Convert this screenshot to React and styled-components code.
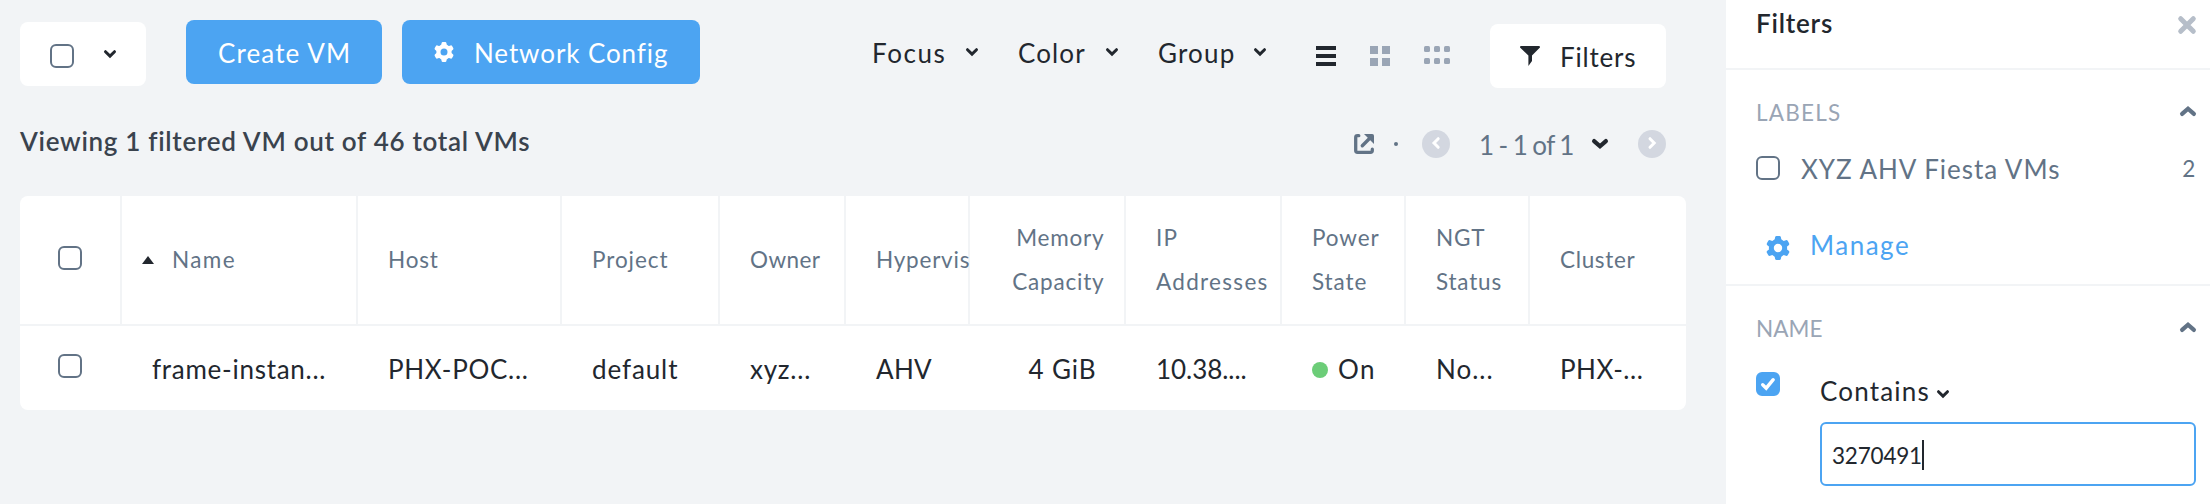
import React from "react";
import styled, { createGlobalStyle } from "styled-components";

const color = {
  page: "#f2f4f6",
  line: "#f2f4f6",
  ink: "#22272e",
  title: "#3a434e",
  slate: "#627386",
  muted: "#9aa5b5",
  blue: "#4ca4f2",
  pager: "#d3d7e0",
};

const GlobalStyle = createGlobalStyle`
  *, *::before, *::after { box-sizing: border-box; }
  body {
    margin: 0;
    background: ${color.page};
    color: ${color.ink};
    font-family: Lato, "Open Sans", sans-serif;
    font-size: 26px;
    overflow: hidden;
  }
`;

const Page = styled.div`
  display: flex;
  height: 504px;
`;

const Main = styled.main`
  width: 1726px;
  padding: 20px 40px 0 20px;
`;

const Text = styled.span`
  display: block;
  flex: none;
  padding-top: 1px;
  font-size: ${(p) => (p.$small ? "22.5px" : "26px")};
  font-weight: ${(p) => (p.$bold ? 600 : 400)};
  letter-spacing: ${(p) => p.$track ?? 0.8}px;
  color: ${(p) => p.$color ?? "inherit"};
  white-space: nowrap;
`;

/* Toolbar */
const Toolbar = styled.div`
  display: flex;
  align-items: flex-start;
  height: 68px;
  padding-right: 20px;
`;

const SelectAll = styled.div`
  display: flex;
  align-items: center;
  gap: 30px;
  width: 126px;
  height: 64px;
  margin: 2px 40px 0 0;
  padding: 3px 0 0 30px;
  border-radius: 8px;
  background: #fff;

  svg { margin-bottom: 4px; }
`;

const PrimaryButton = styled.button`
  display: flex;
  align-items: center;
  gap: 20px;
  height: 64px;
  width: ${(p) => p.$width}px;
  margin-right: 20px;
  padding: 0 0 0 32px;
  border: 0;
  border-radius: 8px;
  background: ${color.blue};
  color: #fff;
  font: inherit;
`;

const Menus = styled.div`
  display: flex;
  align-items: center;
  gap: 40px;
  height: 64px;
  margin-left: auto;
`;

const Menu = styled.div`
  display: flex;
  align-items: center;
  justify-content: space-between;
  width: ${(p) => p.$width}px;
`;

const Views = styled.div`
  display: flex;
  align-items: flex-start;
  gap: 34px;
  margin: 26px 40px 0 50px;
`;

const FilterButton = styled.button`
  display: flex;
  align-items: center;
  gap: 20px;
  width: 176px;
  height: 64px;
  margin-top: 4px;
  padding: 0 0 0 30px;
  border: 0;
  border-radius: 8px;
  background: #fff;
  color: ${color.ink};
  font: inherit;
`;

/* Summary line and pager */
const Summary = styled.div`
  display: flex;
  justify-content: space-between;
  align-items: flex-start;
  height: 108px;
  padding: 36px 20px 0 0;
  line-height: 32px;
`;

const Pager = styled.div`
  display: flex;
  align-items: center;
  height: 28px;
  margin-top: 6px;
`;

const Dot = styled.span`
  width: 4px;
  height: 4px;
  margin: 0 24px 0 20px;
  border-radius: 50%;
  background: ${color.slate};
`;

const Range = styled(Text)`
  width: 113px;
  margin-left: 29px;
  word-spacing: -1.2px;
`;

const PageButton = styled.button`
  display: grid;
  place-items: center;
  width: 28px;
  height: 28px;
  padding: 0 0 2px;
  border: 0;
  border-radius: 50%;
  background: ${color.pager};
`;

const NextButton = styled(PageButton)`
  margin-left: 30px;
`;

/* Table */
const Table = styled.div`
  width: 1666px;
  border-radius: 8px;
  background: #fff;
  overflow: hidden;
`;

const Row = styled.div`
  display: grid;
  grid-template-columns: 102px 236px 204px 158px 126px 124px 156px 156px 124px 124px 156px;
  height: ${(p) => (p.$head ? 130 : 84)}px;
  border-bottom: ${(p) => (p.$head ? `2px solid ${color.line}` : "0")};
`;

const Cell = styled.div`
  display: flex;
  align-items: center;
  min-width: 0;
  padding: 0 0 ${(p) => (p.$check ? 4 : 0)}px ${(p) => (p.$check ? 38 : 30)}px;
  ${(p) => p.$right && "justify-content: flex-end; padding-right: 29.5px;"}
`;

const HeadCell = styled(Cell)`
  border-right: 2px solid ${color.line};
  line-height: 44px;
  color: ${color.slate};
  ${(p) => p.$right && "padding-right: 19.5px; text-align: right;"}
  ${(p) => p.$sorted && "padding-left: 20px; gap: 18px;"}

  &:last-child { border-right: 0; }
`;

const HeadText = styled(Text)`
  white-space: pre;
  margin-bottom: 1px;
`;

const StatusDot = styled.span`
  width: 16px;
  height: 16px;
  margin: 4px 10px 0 0;
  border-radius: 50%;
  background: #6ccd78;
`;

const Checkbox = styled.span`
  display: grid;
  place-items: center;
  flex: none;
  width: 24px;
  height: 24px;
  border: 2px solid ${(p) => (p.$checked ? color.blue : color.slate)};
  border-radius: 6px;
  background: ${(p) => (p.$checked ? color.blue : "#fff")};
`;

/* Filter panel */
const Panel = styled.aside`
  width: 484px;
  background: #fff;
`;

const PanelHeader = styled.header`
  display: flex;
  align-items: flex-start;
  justify-content: space-between;
  height: 70px;
  padding: 6px 14px 0 30px;
  border-bottom: 2px solid ${color.line};
  line-height: 32px;

  svg { margin-top: 10px; }
`;

const Section = styled.section`
  padding: 27px 14px 0 30px;
  line-height: 30px;

  &:not(:last-child) {
    height: 216px;
    border-bottom: 2px solid ${color.line};
  }
`;

const SectionTitle = styled.div`
  display: flex;
  justify-content: space-between;
  align-items: center;
  height: 30px;

  svg { margin-bottom: 3px; }
`;

const LabelRow = styled.div`
  display: flex;
  align-items: center;
  height: 32px;
  margin-top: 25px;

  ${Text}:nth-child(2) { margin: 0 auto 0 21px; }
`;

const ManageLink = styled.a`
  display: flex;
  align-items: center;
  gap: 20px;
  height: 32px;
  margin: 44px 0 0 10px;
  color: ${color.blue};

  svg { margin-top: 8px; }
`;

const NameFilter = styled.div`
  display: flex;
  gap: 40px;
  margin-top: 29px;
`;

const NameFields = styled.div`
  flex: 1;
  padding-top: 3px;
`;

const Operator = styled.div`
  display: flex;
  align-items: center;
  gap: 7px;
  height: 30px;

  svg { margin-top: 8px; }
`;

const Input = styled.div`
  display: flex;
  align-items: center;
  height: 64px;
  margin-top: 17px;
  padding: 2px 0 0 10px;
  border: 2px solid ${color.blue};
  border-radius: 6px;
`;

const Caret = styled.span`
  width: 2px;
  height: 30px;
  background: ${color.ink};
`;

/* Icons */
const Svg = styled.svg`
  display: block;
  flex: none;
  overflow: visible;
`;

const Chevron = ({ up, large, tint = color.ink }) => (
  <Svg width={large ? 16 : 12} height={large ? 10 : 8} viewBox={large ? "0 0 16 10" : "0 0 12 8"}
    fill="none" stroke={tint} strokeWidth={large ? 4.2 : 3} strokeLinecap="round">
    {large
      ? <path d={up ? "M2.1 7.9 8 2.7l5.9 5.2" : "M2.1 2.1 8 7.3l5.9-5.2"} />
      : <path d="M1.5 1.7 6 6.1l4.5-4.4" />}
  </Svg>
);

const Gear = ({ size, tint }) => (
  <Svg width={size} height={size} viewBox="0 0 24 24">
    <circle cx="12" cy="12" r="6.7" fill="none" stroke={tint} strokeWidth="5" />
    {[0, 60, 120, 180, 240, 300].map((a) => (
      <path key={a} d="M10.6 0h2.8q1.3 0 1.5 1.3L15.600 5H8.400l.7-3.700Q9.300 0 10.600 0Z" fill={tint} transform={`rotate(${a} 12 12)`} />
    ))}
  </Svg>
);

const ListIcon = () => (
  <Svg width="20" height="20" fill={color.ink}>
    {[0, 8, 16].map((y) => <rect key={y} y={y} width="20" height="4" />)}
  </Svg>
);

const GridIcon = () => (
  <Svg width="20" height="20" fill={color.muted}>
    {[0, 12].map((y) => [0, 12].map((x) => <rect key={`${x}${y}`} x={x} y={y} width="8" height="8" />))}
  </Svg>
);

const TilesIcon = () => (
  <Svg width="26" height="20" fill={color.muted}>
    {[0, 12].map((y) => [0, 10, 20].map((x) => <rect key={`${x}${y}`} x={x} y={y} width="6" height="6" rx="1.5" />))}
  </Svg>
);

const FunnelIcon = () => (
  <Svg width="20" height="20" viewBox="0 0 20 20" fill={color.ink}>
    <path d="M.8 0h18.4q1.3.5.5 1.7L12 9.500V15l-3.600 5V9.500L.3 1.700Q-.5.500.8 0Z" />
  </Svg>
);

const ExportIcon = () => (
  <Svg width="20" height="20" viewBox="0 0 20 20" fill="none" stroke={color.slate} strokeLinecap="round">
    <path d="M4.800 1.700H3.500Q1.700 1.700 1.700 3.500v13q0 1.800 1.800 1.800h13q1.800 0 1.800-1.800v-1.300" strokeWidth="3.3" />
    <path d="M8.300 11.700 15 5" strokeWidth="3.4" />
    <path d="M10 0h8.200Q20 0 20 1.800V10Z" fill={color.slate} stroke="none" />
  </Svg>
);

const Arrow = ({ d }) => (
  <Svg width="8" height="12" viewBox="0 0 8 12" fill="none" stroke="#fff" strokeWidth="3" strokeLinecap="round">
    <path d={d} />
  </Svg>
);

const CloseIcon = () => (
  <Svg width="18" height="18" viewBox="0 0 18 18" stroke="#b6bec9" strokeWidth="5" strokeLinecap="round">
    <path d="m2.7 2.7 12.6 12.6M15.3 2.7 2.7 15.3" />
  </Svg>
);

const CheckIcon = () => (
  <Svg width="14" height="12" viewBox="0 0 14 12" fill="none" stroke="#fff" strokeWidth="3.4" strokeLinecap="round">
    <path d="M1.7 6.8 5.2 10.2 12.2 1.7" />
  </Svg>
);

const SortIcon = () => (
  <Svg width="12" height="8" viewBox="0 0 12 8" fill={color.ink}>
    <path d="M6 0 12 8H0Z" />
  </Svg>
);

const columns = [
  { head: "Name", headTrack: 1.4, value: "frame-instan...", track: 0.73, sorted: true },
  { head: "Host", value: "PHX-POC...", track: 0.7 },
  { head: "Project", headTrack: 0.93, value: "default", track: 0.9 },
  { head: "Owner", headTrack: 0.42, value: "xyz...", track: 0.75 },
  { head: "Hypervis", headTrack: 0.78, value: "AHV", track: 0.3 },
  { head: "Memory\nCapacity", value: "4 GiB", track: 0.88, right: true },
  { head: "IP\nAddresses", headTrack: 1.3, value: "10.38....", track: -0.05 },
  { head: "Power\nState", headTrack: 0.9, value: "On", track: 1.5, status: true },
  { head: "NGT\nStatus", value: "No...", track: 1 },
  { head: "Cluster", headTrack: 0.66, value: "PHX-...", track: 0.5 },
];

export default function App() {
  return (
    <Page>
      <GlobalStyle />
      <Main>
        <Toolbar>
          <SelectAll>
            <Checkbox />
            <Chevron />
          </SelectAll>
          <PrimaryButton $width={196}><Text $track={1.13}>Create VM</Text></PrimaryButton>
          <PrimaryButton $width={298}>
            <Gear size={20} tint="#fff" />
            <Text $track={0.9}>Network Config</Text>
          </PrimaryButton>
          <Menus>
            <Menu $width={106}><Text $track={1.6}>Focus</Text><Chevron /></Menu>
            <Menu $width={100}><Text $track={1.1}>Color</Text><Chevron /></Menu>
            <Menu $width={108}><Text $track={1.2}>Group</Text><Chevron /></Menu>
          </Menus>
          <Views><ListIcon /><GridIcon /><TilesIcon /></Views>
          <FilterButton>
            <FunnelIcon />
            <Text $track={0.8}>Filters</Text>
          </FilterButton>
        </Toolbar>

        <Summary>
          <Text $bold $track={0.7} $color={color.title}>Viewing 1 filtered VM out of 46 total VMs</Text>
          <Pager>
            <ExportIcon />
            <Dot />
            <PageButton><Arrow d="M6.2 1.7 2 6l4.2 4.3" /></PageButton>
            <Range $track={-0.5} $color={color.slate}>1 - 1 of 1</Range>
            <Chevron large />
            <NextButton><Arrow d="M2 1.7 6.2 6 2 10.3" /></NextButton>
          </Pager>
        </Summary>

        <Table>
          <Row $head>
            <HeadCell $check><Checkbox /></HeadCell>
            {columns.map((c) => (
              <HeadCell key={c.head} $right={c.right} $sorted={c.sorted}>
                {c.sorted && <SortIcon />}
                <HeadText $small $track={c.headTrack}>{c.head}</HeadText>
              </HeadCell>
            ))}
          </Row>
          <Row>
            <Cell $check><Checkbox /></Cell>
            {columns.map((c) => (
              <Cell key={c.head} $right={c.right}>
                {c.status && <StatusDot />}
                <Text $track={c.track}>{c.value}</Text>
              </Cell>
            ))}
          </Row>
        </Table>
      </Main>

      <Panel>
        <PanelHeader>
          <Text $bold $track={0.8}>Filters</Text>
          <CloseIcon />
        </PanelHeader>
        <Section>
          <SectionTitle>
            <Text $small $track={1.22} $color={color.muted}>LABELS</Text>
            <Chevron large up tint={color.slate} />
          </SectionTitle>
          <LabelRow>
            <Checkbox />
            <Text $track={0.98} $color={color.slate}>XYZ AHV Fiesta VMs</Text>
            <Text $small $color={color.slate}>2</Text>
          </LabelRow>
          <ManageLink>
            <Gear size={24} tint={color.blue} />
            <Text $track={1.5}>Manage</Text>
          </ManageLink>
        </Section>
        <Section>
          <SectionTitle>
            <Text $small $track={0.1} $color={color.muted}>NAME</Text>
            <Chevron large up tint={color.slate} />
          </SectionTitle>
          <NameFilter>
            <Checkbox $checked><CheckIcon /></Checkbox>
            <NameFields>
              <Operator><Text $track={1.19}>Contains</Text><Chevron /></Operator>
              <Input><Text $small $track={-0.2}>3270491</Text><Caret /></Input>
            </NameFields>
          </NameFilter>
        </Section>
      </Panel>
    </Page>
  );
}
